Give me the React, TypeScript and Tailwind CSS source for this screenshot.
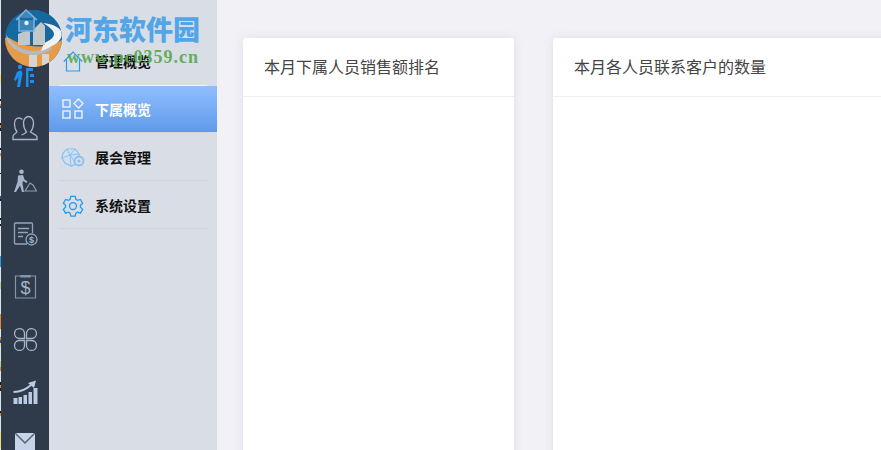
import React from "react";

const noise = [
  { h: 74, c: "#dfe2e8" }, { h: 9, c: "#e8df7a" }, { h: 16, c: "#dfe2e8" }, { h: 2, c: "#1b1b1b" },
  { h: 3, c: "#dfe2e8" }, { h: 2, c: "#e08a2e" }, { h: 2, c: "#2a4f9e" }, { h: 15, c: "#dfe2e8" },
  { h: 2, c: "#1b1b1b" }, { h: 3, c: "#e08a2e" }, { h: 3, c: "#1b1b1b" }, { h: 17, c: "#dfe2e8" },
  { h: 2, c: "#1b1b1b" }, { h: 3, c: "#dfe2e8" }, { h: 3, c: "#e08a2e" }, { h: 17, c: "#dfe2e8" },
  { h: 1, c: "#1b1b1b" }, { h: 22, c: "#dfe2e8" }, { h: 3, c: "#2a4f9e" }, { h: 2, c: "#1b1b1b" },
  { h: 17, c: "#dfe2e8" }, { h: 2, c: "#1b1b1b" }, { h: 4, c: "#dfe2e8" }, { h: 2, c: "#1b1b1b" },
  { h: 30, c: "#dfe2e8" }, { h: 11, c: "#2f9be0" }, { h: 15, c: "#dfe2e8" }, { h: 7, c: "#c3d27a" },
  { h: 25, c: "#dfe2e8" }, { h: 15, c: "#e08a2e" }, { h: 8, c: "#dfe2e8" }, { h: 3, c: "#e08a2e" },
  { h: 3, c: "#2a4f9e" }, { h: 3, c: "#e8df7a" }, { h: 15, c: "#dfe2e8" }, { h: 6, c: "#c3d27a" },
  { h: 4, c: "#e08a2e" }, { h: 11, c: "#dfe2e8" }, { h: 3, c: "#1b1b1b" }, { h: 3, c: "#e08a2e" },
  { h: 3, c: "#1b1b1b" }, { h: 20, c: "#dfe2e8" }, { h: 2, c: "#1b1b1b" }, { h: 3, c: "#e08a2e" },
  { h: 16, c: "#dfe2e8" }, { h: 17, c: "#e8df7a" },
];

const ToolsIcon = () => (
  <svg width="24" height="24" viewBox="0 0 24 24" fill="#1b8fef">
    <circle cx="7" cy="4" r="2.2" />
    <path d="M4 9l4-2 1.500 3L7 24H4l1.500-10-3 4L1 16.500z" />
    <path d="M13 5h7v3h-7zM17 11h4v3h-4zM17 17h4v3h-4z" />
    <path d="M13 8h2.500v16H13z" />
  </svg>
);

const PeopleIcon = () => (
  <svg width="26" height="26" viewBox="0 0 26 26" fill="none" stroke="#a7b5cc" strokeWidth="1.300">
    <path d="M10 24.500h15V22c0-2-4-3-6.500-5 2-2.500 3-5 3-9 0-4-2.500-6.500-5-6.500s-5 2.500-5 6.500c0 4 1 6.500 3 9-1.500 1.500-3.500 2.500-5 3" />
    <path d="M10.500 4.500C9.500 3.500 8 3 6.800 3 4 3 2.500 5.500 2.500 9c0 3.500 1 6 2.500 8-1 1.500-4 2.500-4 4.500v3h9.500" />
  </svg>
);

const WorkerIcon = () => (
  <svg width="24" height="23" viewBox="0 0 24 23" fill="none">
    <circle cx="8.500" cy="2.800" r="2.300" fill="#a7b5cc" />
    <path d="M5 6.500l5-.5 1.500 4.500 3 2-1 1.500-3.500-2-.5 2.500 1.500 8.500H9l-2-6.500L3 23H1l3.500-10z" fill="#a7b5cc" />
    <path d="M12 22l5-8 3 2 3.500 6z" stroke="#8e9db5" strokeWidth="1.200" />
  </svg>
);

const BillIcon = () => (
  <svg width="25" height="24" viewBox="0 0 25 24" fill="none" stroke="#95a5bd" strokeWidth="1.300">
    <path d="M14 22H2.500a1 1 0 0 1-1-1V2a1 1 0 0 1 1-1h16a1 1 0 0 1 1 1v9" />
    <path d="M5 6.500h11M5 10.500h10M5 14.500h5" strokeWidth="1.500" />
    <circle cx="18.500" cy="17.500" r="5.500" />
    <text x="18.500" y="20.500" fontSize="9" fontWeight="700" textAnchor="middle" fill="#a7b5cc" stroke="none" fontFamily="Liberation Sans, sans-serif">$</text>
  </svg>
);

const ClipboardIcon = () => (
  <svg width="23" height="25" viewBox="0 0 23 25" fill="none" stroke="#8595ad" strokeWidth="1.200">
    <path d="M6 2H1.500v22h20V2H17" />
    <rect x="6" y="1" width="11" height="2.500" rx="1" fill="#8595ad" stroke="none" />
    <text x="11.500" y="20" fontSize="18" fontWeight="400" textAnchor="middle" fill="#a7b5cc" stroke="none" fontFamily="Liberation Sans, sans-serif">$</text>
  </svg>
);

const CloverIcon = () => (
  <svg width="25" height="25" viewBox="0 0 25 25" fill="none" stroke="#a7b5cc" strokeWidth="1.300">
    <path d="M11.500 11.500H6a5 5 0 1 1 5.500-5.500z" />
    <path d="M13.500 11.500H19a5 5 0 1 0-5.500-5.500z" />
    <path d="M11.500 13.500H6a5 5 0 1 0 5.500 5.500z" />
    <path d="M13.500 13.500H19a5 5 0 1 1-5.500 5.500z" />
  </svg>
);

const ChartIcon = () => (
  <svg width="25" height="25" viewBox="0 0 25 25" fill="#bccbe3">
    <path d="M0.500 18h4v6h-4zM5.500 17h3.500v7H5.500zM10.500 15h3.500v9h-3.500zM15.500 12h3.500v12h-3.500zM20.500 8h4v16h-4z" />
    <path d="M0.500 12c6 0 12-2 17.500-7" fill="none" stroke="#bccbe3" strokeWidth="1.800" />
    <path d="M15 3l8-2.500-2 7.500z" />
  </svg>
);

const MailIcon = () => (
  <svg width="20" height="25" viewBox="0 0 20 25" fill="none">
    <rect x="0" y="0" width="20" height="25" fill="#c6d3e8" />
    <path d="M0 0l10 10L20 0" stroke="#59667a" strokeWidth="1.500" />
  </svg>
);

const HomeIcon = () => (
  <svg width="20" height="21" viewBox="0 0 20 21" fill="none" stroke="#2a9bf0" strokeWidth="1.200">
    <path d="M0.800 10.500L10 1l9.200 9.500" />
    <path d="M3.500 8.500v11.500h13V8.500" />
  </svg>
);

const GridIcon = () => (
  <svg width="22" height="22" viewBox="0 0 22 22" fill="none" stroke="#e6f0ff" strokeWidth="1.500">
    <rect x="1" y="2" width="7" height="7" />
    <path d="M16.500 1l4.500 4.500-4.500 4.500L12 5.500z" />
    <rect x="1" y="13" width="7" height="7" />
    <rect x="13" y="13" width="7" height="7" />
  </svg>
);

const GemIcon = () => (
  <svg width="24" height="20" viewBox="0 0 24 20" fill="none" stroke="#85c0f2" strokeWidth="1.200">
    <path d="M6 1h8l4 5v4l-3 6-5 2-6-3-3-5 1-5z" fill="#cfe0f2" />
    <path d="M6 1l3 6 5-6M1 10l8-3 6 9M9 7l1 11M9 7l9-1" strokeWidth="0.900" />
    <circle cx="18" cy="13" r="4.500" fill="#d9dde6" strokeWidth="1.800" />
    <circle cx="18" cy="13" r="1.500" fill="#85c0f2" stroke="none" />
  </svg>
);

const GearIcon = () => (
  <svg width="22" height="22" viewBox="0 0 24 24" fill="none" stroke="#1f9bf2" strokeWidth="1.400">
    <path d="M9.600 1.500h4.800l.7 3.200 1.900 1.100 3.100-1 2.400 4.200-2.400 2.200v2.200l2.400 2.200-2.400 4.200-3.100-1-1.900 1.100-.7 3.200H9.600l-.7-3.200L7 18.800l-3.100 1-2.400-4.200 2.400-2.200v-2.200L1.500 9l2.400-4.200 3.100 1 1.900-1.100z" />
    <circle cx="12" cy="12" r="3.800" />
  </svg>
);

const Logo = () => (
  <svg width="60" height="62" viewBox="0 0 60 62" className="absolute left-[4px] top-[8px]">
    <defs>
      <clipPath id="ball">
        <circle cx="29.500" cy="30.500" r="28.500" />
      </clipPath>
    </defs>
    <g clipPath="url(#ball)">
      <rect width="60" height="62" fill="#15699f" />
      <path d="M0 30h60v32H0z" fill="#e69b48" />
      <path d="M0 0h60v30C50 40 20 44 0 26z" fill="#15699f" />
      <path d="M2 27c8 11 18 16 27 16 7 0 13-2 17-5l2 3c-6 4-12 6-19 6C17 47 7 40 3 32z" fill="#b5b9c0" />
      <path d="M39 15c10 1 19 5 19 11 0 5-5 10-12 13-3 2-6 3-9 4l3-8c5-2 10-5 10-9 0-3-4-7-11-11z" fill="#eef2f5" />
      <path d="M14 37V26l12-5v16zM29 37V22l8-8 4 4v19z" fill="#c3c6cb" />
      <path d="M25 59V47h8v12zM38 59V46h7v13z" fill="#d8d4ce" />
    </g>
    <path d="M12 12L22 2l11 10M15 10v13h15V10" fill="#3b86bd" stroke="#7fb4dc" strokeWidth="1.500" />
    <circle cx="22.500" cy="15" r="2.200" fill="#f0f0f0" />
  </svg>
);

const navIcons = [ToolsIcon, PeopleIcon, WorkerIcon, BillIcon, ClipboardIcon, CloverIcon, ChartIcon, MailIcon];

const menu = [
  { label: "管理概览", Icon: HomeIcon, sep: "bg-[#eef1f6]", h: "h-[48px]", pt: "" },
  { label: "下属概览", Icon: GridIcon, sep: "bg-[#ced2db]", h: "h-[47px]", pt: "", active: true },
  { label: "展会管理", Icon: GemIcon, sep: "bg-[#ced2db]", h: "h-[48px]", pt: "pt-[2px]" },
  { label: "系统设置", Icon: GearIcon, sep: "bg-[#ced2db]", h: "h-[48px]", pt: "pt-[2px]" },
];

const Card = ({ title, className }: { title: string; className: string }) => (
  <div className={`shrink-0 rounded-[3px] bg-white shadow-[0_0_10px_rgba(190,195,215,0.35)] ${className}`}>
    <div className="flex h-[59px] items-center border-b border-[#eceef3] pb-[2px] pl-[21px] text-[16px] text-[#444444]">
      {title}
    </div>
  </div>
);

export default function App() {
  return (
    <div className="relative flex h-[450px] w-[881px] overflow-hidden bg-[#f1f1f6] font-['Noto_Sans_CJK_SC','Noto_Sans',sans-serif]">
      <div className="flex w-px shrink-0 flex-col">
        {noise.map((n, i) => (
          <div key={i} className="w-px shrink-0" style={{ height: n.h, backgroundColor: n.c }} />
        ))}
      </div>

      <div className="flex w-[48px] shrink-0 flex-col items-center bg-[#2f3a4a] pt-[48px]">
        {navIcons.map((Icon, i) => (
          <div key={i} className="flex h-[53px] w-full shrink-0 items-center justify-center">
            <Icon />
          </div>
        ))}
      </div>

      <div className="w-[168px] shrink-0 bg-[#d9dde6] pt-[38px]">
        {menu.map(({ label, Icon, active, sep, h, pt }) => (
          <div key={label} className={`flex flex-col ${h}`}>
            <div
              className={`flex flex-1 items-center ${pt} ${
                active ? "bg-gradient-to-b from-[#8fbeff] to-[#5f9aea]" : ""
              }`}
            >
              <div className="flex w-[46px] shrink-0 justify-center pl-[2px]">
                <Icon />
              </div>
              <span className={`text-[14px] font-bold ${active ? "text-white" : "text-[#111111]"}`}>{label}</span>
            </div>
            <div className={`mx-[10px] h-px shrink-0 ${sep}`} />
          </div>
        ))}
      </div>

      <div className="flex min-w-0 flex-1 gap-[39px] overflow-hidden pl-[26px] pt-[38px]">
        <Card title="本月下属人员销售额排名" className="h-[430px] w-[271px]" />
        <Card title="本月各人员联系客户的数量" className="h-[430px] w-[340px]" />
      </div>

      <Logo />
      <div className="absolute left-[65px] top-[10px] text-[27px] font-black leading-[38px] text-[#4da3e8] opacity-95">
        河东软件园
      </div>
      <div className="absolute left-[67px] top-[47px] font-['Liberation_Serif',serif] text-[18px] font-bold leading-[20px] tracking-[1px] text-[#58a84f] opacity-90">
        www.pc0359.cn
      </div>
    </div>
  );
}
